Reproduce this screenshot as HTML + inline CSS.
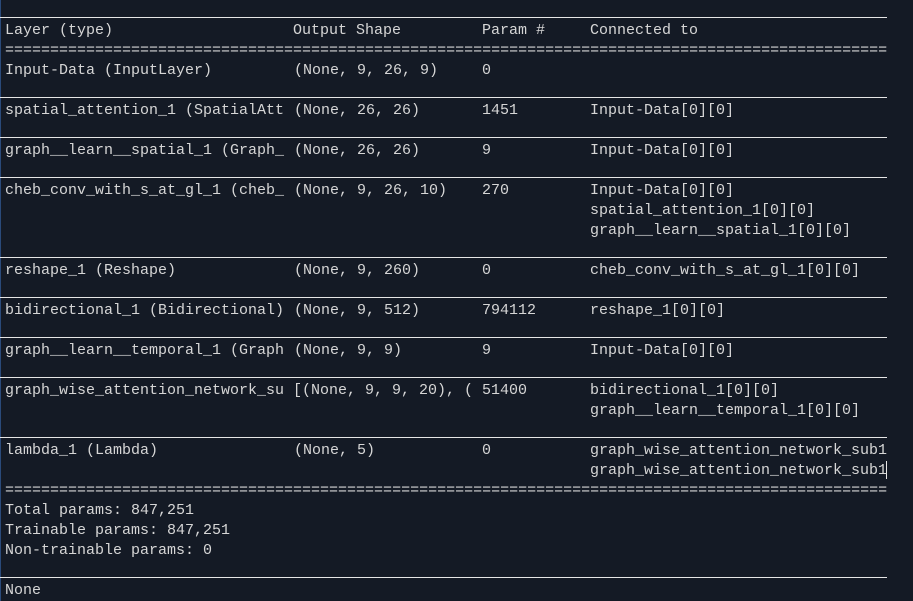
<!DOCTYPE html>
<html><head><style>
html,body{margin:0;padding:0;background:#141a25;}
body{width:913px;height:601px;position:relative;overflow:hidden;font-family:"Liberation Mono",monospace;font-size:15px;color:#d6d6d6;}
.l{position:absolute;height:20px;line-height:20px;white-space:pre;margin-top:1px;}
.r{position:absolute;left:0;width:887px;height:1px;background:#e6e6e6;}
.edge{position:absolute;left:0;top:0;width:1px;height:601px;background:#2a4a7a;}
</style></head><body>
<div class="edge"></div>
<div class="r" style="top:17px"></div>
<div class="l" style="top:20px;left:5px">Layer (type)</div><div class="l" style="top:20px;left:293px">Output Shape</div><div class="l" style="top:20px;left:482px">Param #</div><div class="l" style="top:20px;left:590px">Connected to</div>
<div class="l" style="top:40px;left:5px">==================================================================================================</div>
<div class="l" style="top:60px;left:5px">Input-Data (InputLayer)</div><div class="l" style="top:60px;left:294px">(None, 9, 26, 9)</div><div class="l" style="top:60px;left:482px">0</div>
<div class="r" style="top:97px"></div>
<div class="l" style="top:100px;left:5px">spatial_attention_1 (SpatialAtt</div><div class="l" style="top:100px;left:294px">(None, 26, 26)</div><div class="l" style="top:100px;left:482px">1451</div><div class="l" style="top:100px;left:590px">Input-Data[0][0]</div>
<div class="r" style="top:137px"></div>
<div class="l" style="top:140px;left:5px">graph__learn__spatial_1 (Graph_</div><div class="l" style="top:140px;left:294px">(None, 26, 26)</div><div class="l" style="top:140px;left:482px">9</div><div class="l" style="top:140px;left:590px">Input-Data[0][0]</div>
<div class="r" style="top:177px"></div>
<div class="l" style="top:180px;left:5px">cheb_conv_with_s_at_gl_1 (cheb_</div><div class="l" style="top:180px;left:294px">(None, 9, 26, 10)</div><div class="l" style="top:180px;left:482px">270</div><div class="l" style="top:180px;left:590px">Input-Data[0][0]</div>
<div class="l" style="top:200px;left:590px">spatial_attention_1[0][0]</div>
<div class="l" style="top:220px;left:590px">graph__learn__spatial_1[0][0]</div>
<div class="r" style="top:257px"></div>
<div class="l" style="top:260px;left:5px">reshape_1 (Reshape)</div><div class="l" style="top:260px;left:294px">(None, 9, 260)</div><div class="l" style="top:260px;left:482px">0</div><div class="l" style="top:260px;left:590px">cheb_conv_with_s_at_gl_1[0][0]</div>
<div class="r" style="top:297px"></div>
<div class="l" style="top:300px;left:5px">bidirectional_1 (Bidirectional)</div><div class="l" style="top:300px;left:294px">(None, 9, 512)</div><div class="l" style="top:300px;left:482px">794112</div><div class="l" style="top:300px;left:590px">reshape_1[0][0]</div>
<div class="r" style="top:337px"></div>
<div class="l" style="top:340px;left:5px">graph__learn__temporal_1 (Graph</div><div class="l" style="top:340px;left:294px">(None, 9, 9)</div><div class="l" style="top:340px;left:482px">9</div><div class="l" style="top:340px;left:590px">Input-Data[0][0]</div>
<div class="r" style="top:377px"></div>
<div class="l" style="top:380px;left:5px">graph_wise_attention_network_su</div><div class="l" style="top:380px;left:293px">[(None, 9, 9, 20), (</div><div class="l" style="top:380px;left:482px">51400</div><div class="l" style="top:380px;left:590px">bidirectional_1[0][0]</div>
<div class="l" style="top:400px;left:590px">graph__learn__temporal_1[0][0]</div>
<div class="r" style="top:437px"></div>
<div class="l" style="top:440px;left:5px">lambda_1 (Lambda)</div><div class="l" style="top:440px;left:294px">(None, 5)</div><div class="l" style="top:440px;left:482px">0</div><div class="l" style="top:440px;left:590px">graph_wise_attention_network_sub1</div>
<div class="l" style="top:460px;left:590px">graph_wise_attention_network_sub1</div>
<div style="position:absolute;left:886px;top:461px;width:1px;height:18px;background:#e6e6e6"></div>
<div class="l" style="top:480px;left:5px">==================================================================================================</div>
<div class="l" style="top:500px;left:5px">Total params: 847,251</div>
<div class="l" style="top:520px;left:5px">Trainable params: 847,251</div>
<div class="l" style="top:540px;left:5px">Non-trainable params: 0</div>
<div class="r" style="top:577px"></div>
<div class="l" style="top:580px;left:5px">None</div>
</body></html>
